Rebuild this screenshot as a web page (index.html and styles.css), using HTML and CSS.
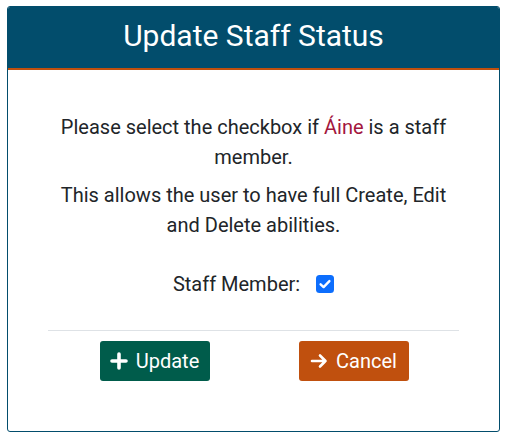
FILE: index.html
```html
<!DOCTYPE html>
<html>
<head>
<meta charset="utf-8">
<link rel="stylesheet" href="styles.css">
</head>
<body>
<div class="card">
  <div class="card-header">Update Staff Status</div>
  <div class="card-body">
    <p class="msg">Please select the checkbox if <span class="name">Áine</span> is a staff member.</p>
    <p class="msg">This allows the user to have full Create, Edit and Delete abilities.</p>
    <div class="field">
      <label for="staff">Staff Member:</label>
      <span class="check">
        <svg viewBox="0 0 18 18" width="18" height="18"><rect x="0" y="0" width="18" height="18" rx="3.5" fill="#0d6efd"/><path d="M4.6 9.3 L7.6 12.1 L13.4 6.1" fill="none" stroke="#fff" stroke-width="2.4" stroke-linecap="round" stroke-linejoin="round"/></svg>
      </span>
    </div>
    <hr class="divider">
    <div class="actions">
      <button class="btn btn-update">
        <svg viewBox="0 0 18 18" width="18" height="18"><path d="M9 2 V16 M2 9 H16" stroke="#fff" stroke-width="3.6" stroke-linecap="round"/></svg>
        <span>Update</span>
      </button>
      <button class="btn btn-cancel">
        <svg viewBox="0 0 18 18" width="18" height="18"><path d="M2 9 H15.5 M10 3.5 L15.5 9 L10 14.5" fill="none" stroke="#fff" stroke-width="2.6" stroke-linecap="round" stroke-linejoin="round"/></svg>
        <span>Cancel</span>
      </button>
    </div>
  </div>
</div>
</body>
</html>
```

FILE: styles.css
```css
html, body {
  margin: 0;
  padding: 0;
  background: #fff;
}
body {
  font-family: Roboto, "Liberation Sans", sans-serif;
  color: #212529;
}
.card {
  margin: 6px 7px 0 7px;
  width: 493px;
  height: 426px;
  box-sizing: border-box;
  border: 1px solid #024d6c;
  border-radius: 3px;
  display: flex;
  flex-direction: column;
  overflow: hidden;
}
.card-header {
  background: #024d6c;
  color: #fff;
  font-size: 30px;
  text-align: center;
  height: 61px;
  line-height: 57px;
  border-bottom: 2px solid #c0500e;
}
.card-body {
  padding: 42px 40px 0 40px;
  text-align: center;
}
.msg {
  font-size: 20px;
  line-height: 30px;
  margin: 0 0 8px 0;
  padding: 0;
}
.name {
  color: #a3163d;
}
.field {
  margin-top: 30px;
  display: flex;
  justify-content: center;
  align-items: center;
  gap: 16px;
  font-size: 20px;
  height: 28px;
}
.check {
  display: inline-flex;
}
.divider {
  margin: 32px 0 10px 0;
  border: 0;
  border-top: 1px solid #dee2e6;
}
.actions {
  display: flex;
  justify-content: center;
  gap: 89px;
  padding-left: 1px;
}
.btn {
  width: 110px;
  height: 40px;
  border: 0;
  border-radius: 3px;
  color: #fff;
  font-family: Roboto, "Liberation Sans", sans-serif;
  font-size: 20px;
  display: flex;
  align-items: center;
  justify-content: center;
  gap: 8px;
  padding: 0;
}
.btn-update {
  background: #005c4b;
}
.btn-cancel {
  background: #c0500e;
}
```
